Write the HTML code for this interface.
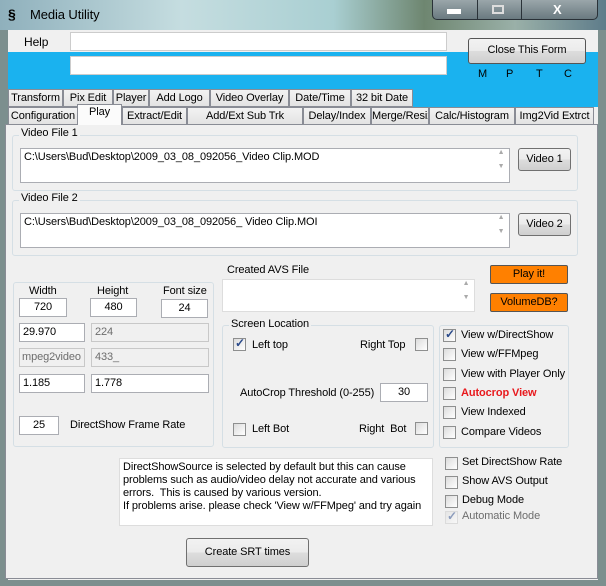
<!DOCTYPE html>
<html><head><meta charset="utf-8"><style>
*{box-sizing:border-box;margin:0;padding:0}
body{width:606px;height:586px;overflow:hidden;position:relative;font-family:"Liberation Sans",sans-serif;font-size:11px;color:#000;background:#7c8f8e;letter-spacing:-0.1px}
.a{position:absolute}
.tb{position:absolute;background:#fff;border:1px solid #abadb3;padding:2px 3px;white-space:nowrap;overflow:hidden}
.dis{background:#f0f0f0;color:#6d6d6d;border-color:#c8c8c8}
.btn{position:absolute;border:1px solid #707070;border-radius:3px;background:linear-gradient(#f2f2f2,#ebebeb 50%,#dddddd 50%,#cfcfcf);text-align:center;white-space:nowrap}
.grp{position:absolute;border:1px solid #d5dfe5;border-radius:3px}
.gl{position:absolute;background:#f0f0f0;padding:0 2px;white-space:nowrap}
.tab{position:absolute;border:1px solid #898c95;background:linear-gradient(#f2f2f2,#e3e3e3);text-align:center;white-space:nowrap;height:18px;line-height:16px;overflow:hidden}
.cb{position:absolute;width:13px;height:13px;border:1px solid #8e8f8f;background:linear-gradient(135deg,#dcdcdc,#fff)}
.cb.on::after{content:"✓";position:absolute;left:1px;top:-3px;font-size:12px;color:#2a4a8a;font-weight:bold}
.lbl{position:absolute;white-space:nowrap}
.sb{position:absolute;right:0;top:0;bottom:0;width:16px;color:#aaa;font-size:7px;text-align:center}
</style></head><body>
<div class="a" style="left:0;top:0;width:606px;height:30px;background:linear-gradient(90deg,#8fb0bc,#c5dde0 30%,#a9cfd2 55%,#6e8670 70%,#9ab0a8 85%,#5e7c8a)"></div>
<div class="lbl" style="left:8px;top:6px;font-weight:bold;font-size:14px">§</div>
<div class="lbl" style="left:30px;top:7px;font-size:13px">Media Utility</div>
<div class="a" style="left:432px;top:0;width:166px;height:20px;border:1px solid #2a3238;border-top:none;border-radius:0 0 5px 5px;background:linear-gradient(#9aa6aa,#6a7a80)"></div>
<div class="a" style="left:477px;top:0;width:1px;height:20px;background:#2a3238"></div>
<div class="a" style="left:521px;top:0;width:1px;height:20px;background:#2a3238"></div>
<div class="a" style="left:447px;top:9px;width:14px;height:5px;background:#fff"></div>
<div class="a" style="left:492px;top:5px;width:12px;height:9px;border:2px solid #ddd"></div>
<div class="lbl" style="left:553px;top:2px;color:#fff;font-weight:bold;font-size:13px">X</div>
<div class="a" style="left:8px;top:30px;width:590px;height:550px;background:#f0f0f0"></div>
<div class="a" style="left:8px;top:52px;width:590px;height:55px;background:#1ab2ef"></div>
<div class="lbl" style="left:24px;top:35px;font-size:12px">Help</div>
<div class="tb" style="left:70px;top:32px;width:377px;height:19px;border-color:#ccc"></div>
<div class="tb" style="left:70px;top:56px;width:377px;height:19px;border-color:#ccc"></div>
<div class="btn" style="left:468px;top:38px;width:118px;height:26px;line-height:23px;border-color:#555">Close This Form</div>
<div class="lbl" style="left:478px;top:68px">M</div><div class="lbl" style="left:506px;top:68px">P</div><div class="lbl" style="left:536px;top:68px">T</div><div class="lbl" style="left:564px;top:68px">C</div>
<div class="tab" style="left:8px;top:89px;width:55px">Transform</div>
<div class="tab" style="left:63px;top:89px;width:50px">Pix Edit</div>
<div class="tab" style="left:113px;top:89px;width:36px">Player</div>
<div class="tab" style="left:149px;top:89px;width:61px">Add Logo</div>
<div class="tab" style="left:210px;top:89px;width:79px">Video Overlay</div>
<div class="tab" style="left:289px;top:89px;width:62px">Date/Time</div>
<div class="tab" style="left:351px;top:89px;width:62px">32 bit Date</div>
<div class="tab" style="left:8px;top:107px;width:70px">Configuration</div>
<div class="tab" style="left:122px;top:107px;width:65px">Extract/Edit</div>
<div class="tab" style="left:187px;top:107px;width:116px">Add/Ext Sub Trk</div>
<div class="tab" style="left:303px;top:107px;width:68px">Delay/Index</div>
<div class="tab" style="left:371px;top:107px;width:58px">Merge/Resize</div>
<div class="tab" style="left:429px;top:107px;width:86px">Calc/Histogram</div>
<div class="tab" style="left:515px;top:107px;width:79px">Img2Vid Extrct</div>
<div class="a" style="left:5px;top:124px;width:593px;height:455px;border:1px solid #898c95;background:#f0f0f0"></div>
<div class="tab" style="left:77px;top:104px;width:45px;height:21px;background:#fbfbfb;border-bottom:none;line-height:15px">Play</div>
<div class="grp" style="left:12px;top:135px;width:566px;height:56px"></div><div class="gl" style="left:19px;top:127px">Video File 1</div>
<div class="tb" style="left:20px;top:148px;width:490px;height:35px">C:\Users\Bud\Desktop\2009_03_08_092056_Video Clip.MOD<div class="sb">▲<br><br>▼</div></div>
<div class="btn" style="left:518px;top:148px;width:53px;height:23px;line-height:21px">Video 1</div>
<div class="grp" style="left:12px;top:200px;width:566px;height:56px"></div><div class="gl" style="left:19px;top:192px">Video File 2</div>
<div class="tb" style="left:20px;top:213px;width:490px;height:35px">C:\Users\Bud\Desktop\2009_03_08_092056_ Video Clip.MOI<div class="sb">▲<br><br>▼</div></div>
<div class="btn" style="left:518px;top:213px;width:53px;height:23px;line-height:21px">Video 2</div>
<div class="grp" style="left:13px;top:282px;width:201px;height:165px"></div>
<div class="lbl" style="left:29px;top:285px">Width</div><div class="lbl" style="left:97px;top:285px">Height</div><div class="lbl" style="left:163px;top:285px">Font size</div>
<div class="tb" style="left:19px;top:298px;width:48px;height:19px;text-align:center">720</div>
<div class="tb" style="left:90px;top:298px;width:47px;height:19px;text-align:center">480</div>
<div class="tb" style="left:161px;top:299px;width:47px;height:19px;text-align:center">24</div>
<div class="tb" style="left:19px;top:323px;width:66px;height:19px">29.970</div>
<div class="tb dis" style="left:91px;top:323px;width:118px;height:19px">224</div>
<div class="tb dis" style="left:19px;top:348px;width:66px;height:19px;padding:2px 2px">mpeg2video</div>
<div class="tb dis" style="left:91px;top:348px;width:118px;height:19px">433_</div>
<div class="tb" style="left:19px;top:374px;width:66px;height:19px">1.185</div>
<div class="tb" style="left:91px;top:374px;width:118px;height:19px">1.778</div>
<div class="tb" style="left:19px;top:416px;width:40px;height:19px;text-align:center">25</div>
<div class="lbl" style="left:70px;top:419px">DirectShow Frame Rate</div>
<div class="lbl" style="left:227px;top:264px">Created AVS File</div>
<div class="tb" style="left:222px;top:279px;width:253px;height:33px;border-color:#ddd"><div class="sb">▲<br><br>▼</div></div>
<div class="btn" style="left:490px;top:265px;width:78px;height:19px;line-height:17px;background:#ff8000;border-color:#555;border-radius:2px">Play it!</div>
<div class="btn" style="left:490px;top:293px;width:78px;height:19px;line-height:17px;background:#ff8000;border-color:#555;border-radius:2px">VolumeDB?</div>
<div class="grp" style="left:222px;top:325px;width:212px;height:123px"></div><div class="gl" style="left:229px;top:318px">Screen Location</div>
<div class="cb on" style="left:233px;top:338px"></div><div class="lbl" style="left:252px;top:339px">Left top</div>
<div class="lbl" style="left:360px;top:339px">Right Top</div><div class="cb" style="left:415px;top:338px"></div>
<div class="lbl" style="left:240px;top:387px">AutoCrop Threshold (0-255)</div>
<div class="tb" style="left:380px;top:383px;width:48px;height:19px;text-align:center">30</div>
<div class="cb" style="left:233px;top:423px"></div><div class="lbl" style="left:252px;top:423px">Left Bot</div>
<div class="lbl" style="left:359px;top:423px">Right&nbsp; Bot</div><div class="cb" style="left:415px;top:422px"></div>
<div class="grp" style="left:439px;top:325px;width:130px;height:123px"></div>
<div class="cb on" style="left:443px;top:329px"></div><div class="lbl" style="left:461px;top:329px">View w/DirectShow</div>
<div class="cb" style="left:443px;top:348px"></div><div class="lbl" style="left:461px;top:348px">View w/FFMpeg</div>
<div class="cb" style="left:443px;top:368px"></div><div class="lbl" style="left:461px;top:368px">View with Player Only</div>
<div class="cb" style="left:443px;top:387px"></div><div class="lbl" style="left:461px;top:387px;color:#e8191d;font-weight:bold">Autocrop View</div>
<div class="cb" style="left:443px;top:406px"></div><div class="lbl" style="left:461px;top:406px">View Indexed</div>
<div class="cb" style="left:443px;top:426px"></div><div class="lbl" style="left:461px;top:426px">Compare Videos</div>
<div class="tb" style="left:119px;top:458px;width:314px;height:68px;border-color:#ddd;white-space:normal;line-height:13px;font-size:11px;padding:2px 3px">DirectShowSource is selected by default but this can cause problems such as audio/video delay not accurate and various errors.&nbsp; This is caused by various version.<br>If problems arise. please check 'View w/FFMpeg' and try again</div>
<div class="cb" style="left:445px;top:457px"></div><div class="lbl" style="left:462px;top:456px">Set DirectShow Rate</div>
<div class="cb" style="left:445px;top:476px"></div><div class="lbl" style="left:462px;top:475px">Show AVS Output</div>
<div class="cb" style="left:445px;top:495px"></div><div class="lbl" style="left:462px;top:494px">Debug Mode</div>
<div class="cb on" style="left:445px;top:511px;border-color:#c8c8c8;opacity:.5"></div><div class="lbl" style="left:462px;top:510px;color:#6d6d6d">Automatic Mode</div>
<div class="btn" style="left:186px;top:538px;width:123px;height:29px;line-height:27px">Create SRT times</div>
</body></html>
